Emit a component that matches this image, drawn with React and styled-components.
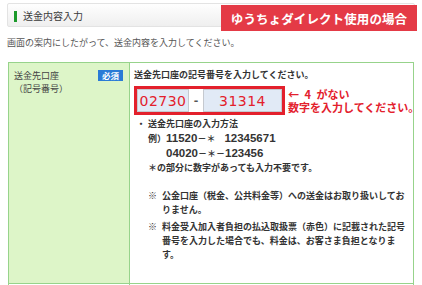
import React from 'react'
import styled, { createGlobalStyle } from 'styled-components'

const GlobalStyle = createGlobalStyle`
  html, body {
    margin: 0;
    padding: 0;
    background: #fff;
  }
  body {
    font-family: "Noto Sans CJK JP", "Liberation Sans", sans-serif;
    overflow: hidden;
  }
`

const Page = styled.div`
  position: relative;
  box-sizing: border-box;
  width: 422px;
  height: 285px;
  padding: 3px 7px 0;
  overflow: hidden;
`

const SectionHeader = styled.div`
  box-sizing: border-box;
  height: 24px;
  display: flex;
  align-items: center;
  gap: 6px;
  padding-left: 6px;
  border: 1px solid #e3e3e3;
  border-radius: 2px;
  background: linear-gradient(#fefefe, #efefef);
  font-size: 10px;
  color: #3a3a3a;

  &::before {
    content: '';
    width: 3px;
    height: 11px;
    margin-top: 2px;
    background: #1c9a2b;
  }
`

const Banner = styled.div`
  position: absolute;
  top: 5px;
  left: 221px;
  width: 196px;
  height: 26px;
  display: flex;
  align-items: center;
  justify-content: center;
  background: #e43a46;
  color: #fff;
  font-size: 12.5px;
  font-weight: 700;
  letter-spacing: 0.1px;
`

const Lead = styled.p`
  margin: 9px 0 12px;
  font-size: 9px;
  line-height: 14px;
  color: #555;
`

const Table = styled.div`
  margin: 0 1px;
  border-top: 1px solid #97d38b;
`

const Row = styled.div`
  display: grid;
  grid-template-columns: 121px minmax(0, 1fr);
  border: 1px solid #97d38b;
  border-top: 0;
  min-height: ${p => p.$h || 0}px;
`

const HeadCell = styled.div`
  display: flex;
  justify-content: space-between;
  align-items: flex-start;
  padding: 6px 6px 0 5px;
  border-right: 1px solid #97d38b;
  background: ${p => (p.$blank ? '#fff' : '#ddf5c8')};
  font-size: 9px;
  line-height: 13px;
  color: #444;
`

const Required = styled.span`
  margin-top: 1px;
  padding: 0 4px;
  height: 11px;
  line-height: 11px;
  background: #2a7bd6;
  color: #fff;
  font-size: 8.5px;
  font-weight: 700;
`

const BodyCell = styled.div`
  padding: 5px 7px 21px 4px;
  font-size: 9px;
  line-height: 14px;
  font-weight: 700;
  color: #333;
`

const InputLine = styled.div`
  display: flex;
  align-items: center;
  gap: 3px;
  margin: 4px 0 2px;
`

const Frame = styled.div`
  flex: none;
  display: flex;
  height: 23px;
  border: 3px solid #e3202c;
  background: #fff;
`

const Field = styled.div`
  box-sizing: border-box;
  width: ${p => p.$w}px;
  display: flex;
  align-items: center;
  justify-content: center;
  border: 1px solid #c5c9cf;
  background: #e1eaf6;
  color: #e3202c;
  font-family: "DejaVu Sans", sans-serif;
  font-size: 14px;
  font-weight: 400;
  letter-spacing: 0.5px;
`

const Dash = styled.span`
  width: 14px;
  text-align: center;
  font-family: "DejaVu Sans", sans-serif;
  font-size: 11px;
  line-height: 23px;
  color: #555;
`

const Hint = styled.div`
  white-space: pre;
  color: #e3202c;
  font-size: 11px;
  line-height: 13px;
  font-weight: 700;
`

const Item = styled.div`
  display: flex;
  padding-left: ${p => p.$indent || 0}px;
  margin-top: ${p => p.$gap || 0}px;
`

const Mark = styled.span`
  flex: 0 0 14px;
  text-align: ${p => (p.$left ? 'left' : 'center')};
`

const Sub = styled.div`
  padding-left: ${p => p.$indent || 0}px;
`

const Num = styled.span`
  font-family: "Liberation Sans", sans-serif;
  font-size: 11.5px;
`

export default function App() {
  return (
    <Page>
      <GlobalStyle />
      <SectionHeader>送金内容入力</SectionHeader>
      <Banner>ゆうちょダイレクト使用の場合</Banner>
      <Lead>画面の案内にしたがって、送金内容を入力してください。</Lead>
      <Table>
        <Row $h={219}>
          <HeadCell>
            <div>
              送金先口座
              <br />
              （記号番号）
            </div>
            <Required>必須</Required>
          </HeadCell>
          <BodyCell>
            <div>送金先口座の記号番号を入力してください。</div>
            <InputLine>
              <Frame>
                <Field $w={52}>02730</Field>
                <Dash>-</Dash>
                <Field $w={79}>31314</Field>
              </Frame>
              <Hint>{'←\u20024\u2002がない\n数字を入力してください。'}</Hint>
            </InputLine>
            <Item>
              <Mark>・</Mark>
              <div>
                送金先口座の入力方法
                <Sub>
                  例）<Num>11520</Num>－＊　<Num>12345671</Num>
                </Sub>
                <Sub $indent={18}>
                  <Num>04020</Num>－＊－<Num>123456</Num>
                </Sub>
                <Sub>＊の部分に数字があっても入力不要です。</Sub>
              </div>
            </Item>
            <Item $indent={14} $gap={14}>
              <Mark $left>※</Mark>
              <div>公金口座（税金、公共料金等）への送金はお取り扱いしておりません。</div>
            </Item>
            <Item $indent={14} $gap={3}>
              <Mark $left>※</Mark>
              <div>料金受入加入者負担の払込取扱票（赤色）に記載された記号番号を入力した場合でも、料金は、お客さま負担となります。</div>
            </Item>
          </BodyCell>
        </Row>
        <Row $h={20}>
          <HeadCell $blank />
          <div />
        </Row>
      </Table>
    </Page>
  )
}
